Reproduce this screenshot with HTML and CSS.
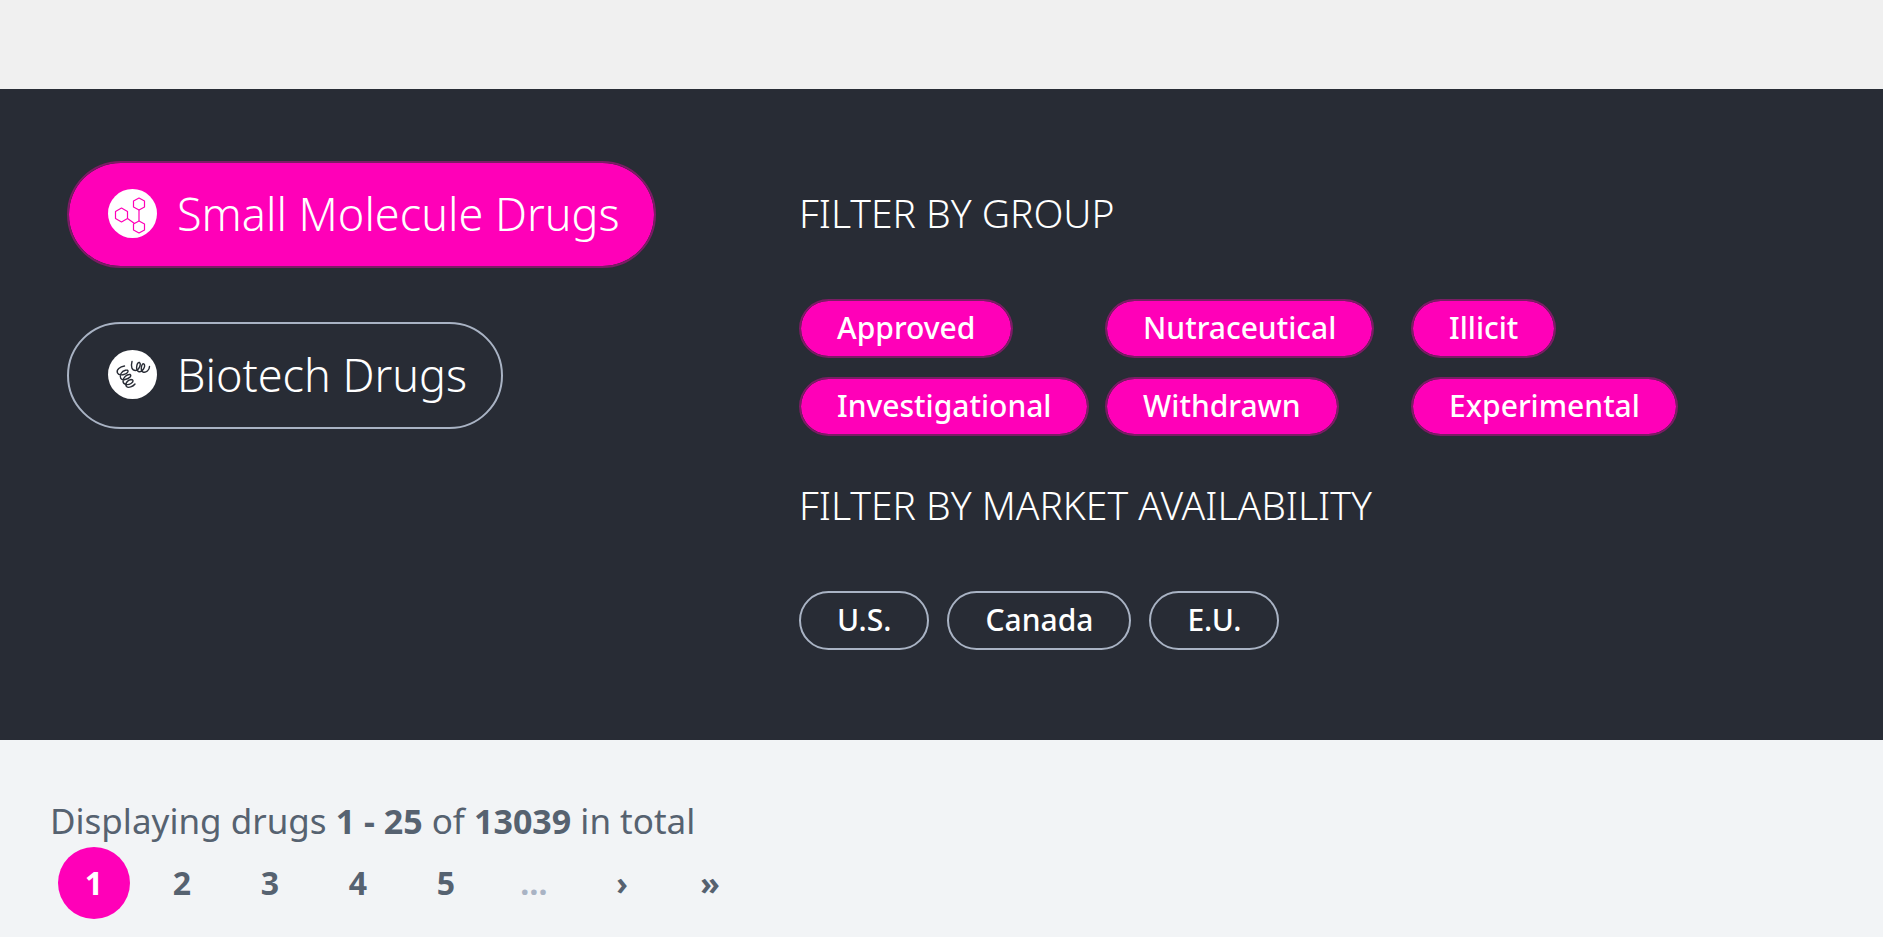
FILE: index.html
```html
<!DOCTYPE html>
<html lang="en">
<head>
<meta charset="utf-8">
<title>Drugs</title>
<link rel="stylesheet" href="styles.css">
</head>
<body>
<div class="top-strip"></div>
<section class="filters">
  <nav class="types" aria-label="Drug type">
    <a class="type type-active" href="#small">
      <svg class="type-icon" viewBox="0 0 49 49" aria-hidden="true">
        <circle cx="24.500" cy="24.500" r="24.500" fill="#fff"/>
        <g fill="none" stroke="#ff00b8" stroke-width="1.200" stroke-linejoin="round">
          <path d="M13.500 19l6 3.500v7l-6 3.500-6-3.500v-7z"/>
          <path d="M31 9l5.500 3v6l-5.500 3-5.500-3v-6z"/>
          <path d="M31 32l5.500 3v6l-5.500 3-5.500-3v-6z"/>
          <path d="M31 21v11M19.500 29.500l7 5"/>
        </g>
      </svg>
      <span>Small Molecule Drugs</span>
    </a>
    <a class="type" href="#biotech">
      <svg class="type-icon" viewBox="0 0 49 49" aria-hidden="true">
        <circle cx="24.500" cy="24.500" r="24.500" fill="#fff"/>
        <g fill="none" stroke="#282c35" stroke-width="1.400" stroke-linecap="round" stroke-linejoin="round">
          <path d="M16.500 16C12 16.500 8 20 9.500 23C11 26.500 19 24.500 20 21.500C20.500 19 15 20 13 23.500C11 27.500 13 30.500 17 29.500C22 28.500 24 25.500 22 24.500C19 24 15 27.500 15 31C15 35 20 35.500 23 33.500C26 31.500 25.500 29.500 23 29.500C19.500 30 16.500 34 18.500 36.500C20.500 38.500 25 36.500 27 34"/>
          <path d="M24 11.500C22.500 17 24 20.500 27.500 20.500C31 20.500 33.500 14 31.500 12.500C29 11.500 27 20 30.500 21.500C34 23 38 16.500 36 14C33.500 12.500 32 20.500 35 22C38 23 41.500 20 41.500 16.500"/>
        </g>
      </svg>
      <span>Biotech Drugs</span>
    </a>
  </nav>
  <div class="filter-groups">
    <h2 class="filter-title">FILTER BY GROUP</h2>
    <div class="pills-grid">
      <a class="pill pill-active" href="#approved">Approved</a>
      <a class="pill pill-active" href="#nutraceutical">Nutraceutical</a>
      <a class="pill pill-active" href="#illicit">Illicit</a>
      <a class="pill pill-active" href="#investigational">Investigational</a>
      <a class="pill pill-active" href="#withdrawn">Withdrawn</a>
      <a class="pill pill-active" href="#experimental">Experimental</a>
    </div>
    <h2 class="filter-title">FILTER BY MARKET AVAILABILITY</h2>
    <div class="pills-row">
      <a class="pill" href="#us">U.S.</a>
      <a class="pill" href="#canada">Canada</a>
      <a class="pill" href="#eu">E.U.</a>
    </div>
  </div>
</section>
<main class="results">
  <p class="summary">Displaying drugs <b>1 - 25</b> of <b>13039</b> in total</p>
  <nav class="pages" aria-label="Pages">
    <a class="page page-current" href="#p1" aria-current="page">1</a>
    <a class="page" href="#p2">2</a>
    <a class="page" href="#p3">3</a>
    <a class="page" href="#p4">4</a>
    <a class="page" href="#p5">5</a>
    <span class="page page-gap">…</span>
    <a class="page" href="#next">›</a>
    <a class="page" href="#last">»</a>
  </nav>
</main>
</body>
</html>
```
FILE: styles.css
```css
* { box-sizing: border-box; }
body {
  margin: 0;
  background: #f2f4f6;
  color: #566270;
  font-family: "Noto Sans", sans-serif;
}
a { color: inherit; text-decoration: none; }
.top-strip { height: 89px; background: #f0f0f0; }
.filters {
  display: grid;
  grid-template-columns: 5fr 7fr;
  padding: 72px 59px 90px 67px;
  background: #282c35;
  color: #fff;
}
.types { display: flex; flex-direction: column; align-items: flex-start; gap: 54px; }
.type {
  display: flex;
  align-items: center;
  gap: 20px;
  padding: 0 34px 2px 39px;
  border: 2px solid #a9b3c4;
  border-radius: 54px;
  font-size: 45px;
  line-height: 101px;
  font-weight: 300;
  white-space: nowrap;
}
.type-icon { width: 49px; height: 49px; flex: none; }
.type-active, .pill-active {
  background: #ff00b8;
  background-clip: padding-box;
}
.type-active { border-color: #7c1c65; }
.filter-title {
  margin: 0;
  padding: 27px 0 61px;
  font-size: 39px;
  line-height: 50px;
  font-weight: 300;
}
.pills-grid {
  display: grid;
  grid-template-columns: repeat(3, 306px);
  justify-items: start;
  row-gap: 19px;
  padding-bottom: 17px;
}
.pills-row { display: flex; gap: 18px; }
.pill {
  padding: 0 36px 1px;
  border: 2px solid #a9b3c4;
  border-radius: 30px;
  font-size: 30px;
  line-height: 54px;
  font-weight: 500;
}
.pill-active { border-color: #7c1c65; }
.results { padding: 55px 50px 17px; }
.summary { margin: 0; font-size: 35px; line-height: 52px; }
.summary b { font-size: 34px; }
.pages { display: flex; gap: 16px; padding: 0 8px; }
.page {
  width: 72px;
  height: 72px;
  border-radius: 50%;
  font-size: 32px;
  line-height: 72px;
  font-weight: 700;
  text-align: center;
}
.page-current { background: #ff00b8; color: #fff; }
.page-gap { color: #a9b3c4; }
```
